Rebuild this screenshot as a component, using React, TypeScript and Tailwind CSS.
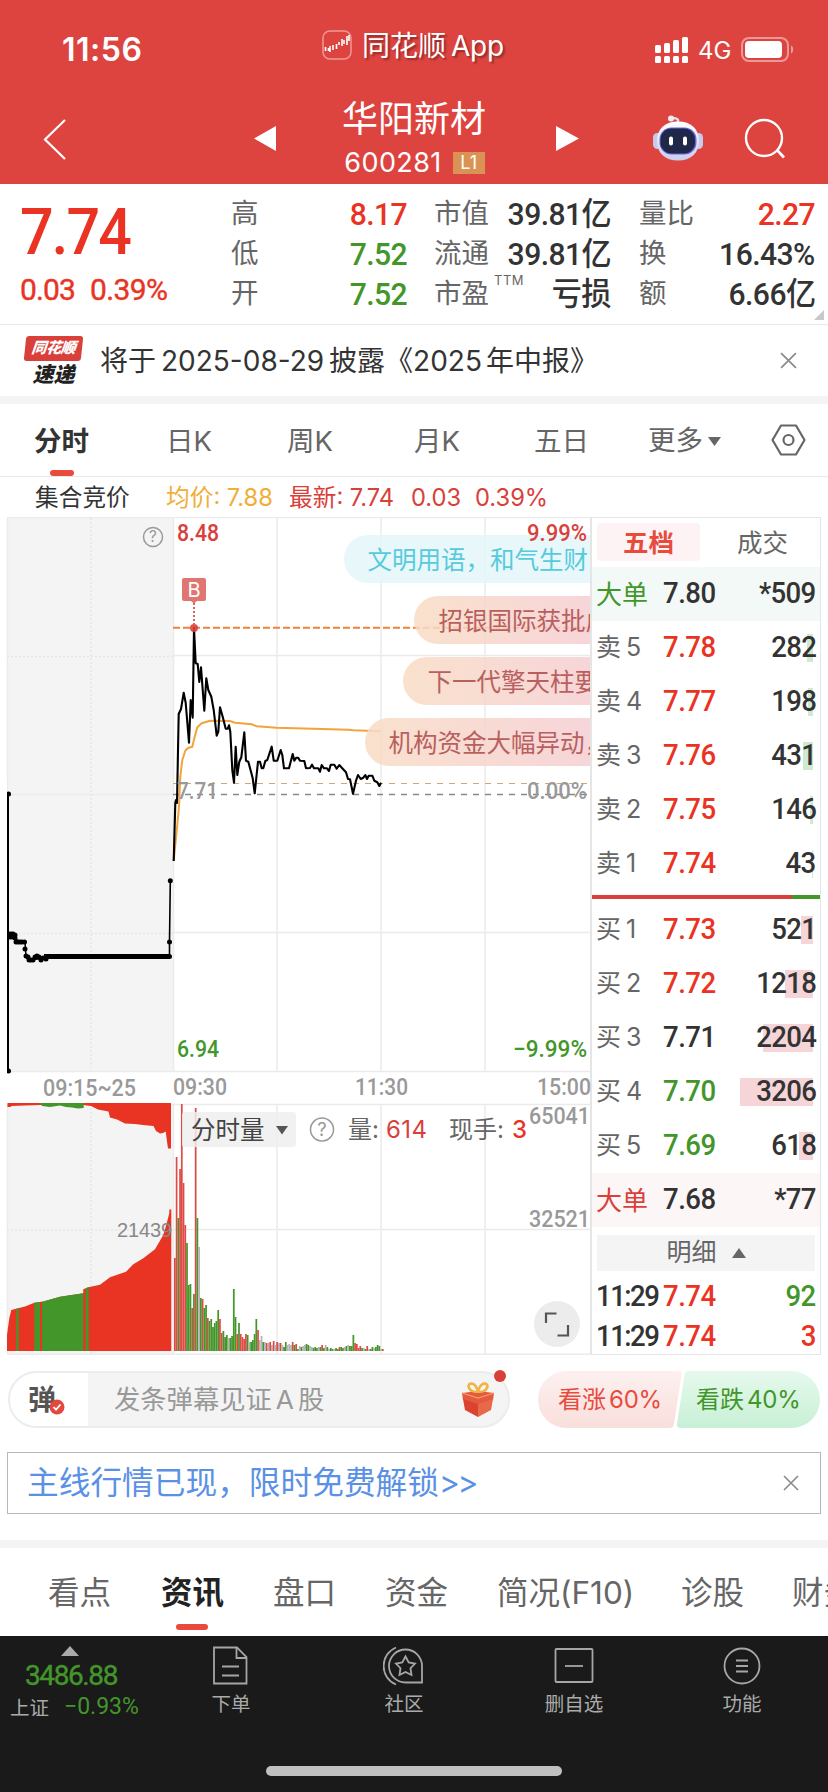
import React from 'react';

// Intraday price line, one point per visible turn
const PRICE =
  '173.7,861 175.3,803 176,800 177,803 178.7,714 181,709 183.7,692.7 185.7,703 189,742.7 190.7,700 192.7,717.7 194,628 195.7,663.3 197.7,664 199.3,682 201,667.3 204.3,710.7 206.3,678.3 208.3,690 211.3,696.7 213.7,710 216.7,735.7 218.3,731.7 220,707.3 222.7,716.7 225.7,728.7 227.7,728.7 229,725.3 230.3,731.7 232.3,770 234,782.7 235.7,746.7 237.3,775 239.3,761.7 241.3,757.3 244.3,732.3 246,760.7 248.3,761.7 251,771.7 252.7,778.3 254.7,793.3 258,761.7 260,761.7 261.7,768.3 263.3,768.3 265.3,761 267.3,760 271.7,746.7 273.7,760.7 277.3,760.7 280.7,750 282.3,755 284,768.3 289,768.3 292.7,754 294.3,760.7 296.3,757.7 298,757.7 300,760.7 304.3,761 306,768.3 310,768 312,764.7 314,768.3 318.3,768.3 320,771.7 321.7,765 324,768.3 327,768.3 329,771 330.7,764.7 334.3,764.7 336.7,768.7 339.3,765 342.7,768.7 346,772.3 348,779 350,779.3 353,793.7 356,780.7 358,775 360.7,779 363.3,777.7 365.3,775 367,779 368.7,775.7 372.3,775.7 374.3,780.7 377.3,782.3 379.3,786 381,782.7';

const AVERAGE =
  '173.7,861 176.8,830 179,806.7 180.3,776.7 182.3,760 185.3,750.7 188,748 192.3,746.7 194.3,738.3 197.3,727.3 201.7,723.3 210,720.7 230,721 235,722.7 251.7,724.3 256.7,726.3 276.7,727.7 348.3,729.7 353.3,730.3 381,731.3';

// Dots of the call auction before the open
const AUCTION_DOTS = [
  [8.5, 794], [9, 934], [11, 934], [13, 934], [15, 935], [10, 937], [12, 937], [15, 938], [16, 942],
  [18, 942], [20, 942], [22, 942], [24.5, 942], [25, 949], [26, 956], [28, 957], [29, 960], [31, 960],
  [33, 960], [35, 957], [37, 956], [39, 957], [41, 960], [43, 958], [46, 959], [48, 956.5],
  [169.5, 956.5], [169.5, 942], [170.3, 880.7], [8.5, 1071],
];

// Volume per minute: colour and bar height
const VOLUME =
  'r93 r194 g133 r182 r247 r168 r126 g108 g66 g67 r43 g57 r243 g133 a104 g53 r52 g43 g46 r33 g30 g32 g24 g28 g30 g41 r32 r18 g20 g14 g16 a13 g13 g15 g62 g34 r17 g28 r17 r14 r12 r17 g16 a9 g9 g11 g17 g32 r21 a11 a15 g9 a9 r8 a8 r9 a6 r10 a6 r9 a8 r8 a6 g4 g9 a6 a7 a6 r9 g6 r7 g2 a5 g4 a5 a6 g7 g6 a5 a4 g3 g4 g3 a4 g4 r6 g3 a6 g4 a2 g3 g2 a2 g3 g2 r4 g4 g3 a4 g5 a6 g5 g5 g16 r8 r7 r3 r5 g3 a3 g2 r5 a2 g2 g4 a3 g4 g6 g5 a2 r2';

const BAR_COLORS: Record<string, string> = { r: '#dd4b46', g: '#43962a', a: '#b5b5b5' };

const bars = VOLUME.split(' ').map((v) => ({
  color: BAR_COLORS[v[0]],
  height: Number(v.slice(1)),
}));

const bullets = [
  { x: 344, y: 535, tx: 367.5, text: '文明用语，和气生财富', fill: '#56cbdc', bg: '#e3f6f9' },
  { x: 414, y: 596, tx: 438.5, text: '招银国际获批虚', fill: '#b9605f', bg: 'url(#warm)' },
  { x: 403, y: 657, tx: 427.5, text: '下一代擎天柱要', fill: '#b9605f', bg: 'url(#warm)' },
  { x: 365, y: 718, tx: 388.5, text: '机构资金大幅异动，', fill: '#b9605f', bg: 'url(#warm)' },
];

const labels = [
  { x: 177, y: 540.5, w: 42, text: '8.48', fill: '#d9403a' },
  { x: 527, y: 540.5, w: 60, text: '9.99%', fill: '#d9403a' },
  { x: 177, y: 798.5, w: 41, text: '7.71', fill: '#999' },
  { x: 527, y: 798.5, w: 60, text: '0.00%', fill: '#999' },
  { x: 177, y: 1057, w: 42, text: '6.94', fill: '#43962a' },
  { x: 513, y: 1057, w: 74, text: '−9.99%', fill: '#43962a' },
  { x: 43, y: 1096, w: 93, text: '09:15~25', fill: '#999' },
  { x: 173, y: 1095, w: 54, text: '09:30', fill: '#999' },
  { x: 355, y: 1095, w: 53, text: '11:30', fill: '#999' },
  { x: 537, y: 1095, w: 54, text: '15:00', fill: '#999' },
  { x: 529, y: 1124, w: 61, text: '65041', fill: '#999' },
  { x: 529, y: 1227, w: 61, text: '32521', fill: '#999' },
];

const stats = [
  [
    ['高', '8.17', 'text-[#ea3323]'],
    ['低', '7.52', 'text-[#43962a]'],
    ['开', '7.52', 'text-[#43962a]'],
  ],
  [
    ['市值', '39.81亿', 'text-[#333]'],
    ['流通', '39.81亿', 'text-[#333]'],
    ['市盈', '亏损', 'text-[#333]'],
  ],
  [
    ['量比', '2.27', 'text-[#ea3323]'],
    ['换', '16.43%', 'text-[#333]'],
    ['额', '6.66亿', 'text-[#333]'],
  ],
];

const sells = [
  ['卖5', '7.78', '282', 6],
  ['卖4', '7.77', '198', 5],
  ['卖3', '7.76', '431', 10],
  ['卖2', '7.75', '146', 3],
  ['卖1', '7.74', '43', 1],
] as const;

const buys = [
  ['买1', '7.73', '521', 12, 'text-[#ea3323]'],
  ['买2', '7.72', '1218', 28, 'text-[#ea3323]'],
  ['买3', '7.71', '2204', 50, 'text-[#333]'],
  ['买4', '7.70', '3206', 73, 'text-[#43962a]'],
  ['买5', '7.69', '618', 14, 'text-[#43962a]'],
] as const;

const StatusBar = () => (
  <div className="flex h-[92px] items-start text-white">
    <div className="ml-[62px] mt-[30px] w-[260px] text-[32px] font-semibold leading-10 tracking-[0.5px]">
      11:56
    </div>
    <svg className="mt-[30px]" width="30" height="30" viewBox="0 0 30 30" fill="none">
      <rect x="1" y="1" width="28" height="28" rx="7" stroke="#eb9a97" strokeWidth="1.5" />
      <path
        d="M3.500 17v4M6.500 18v3M8 16v6M11 15v5M14.500 14v5M17 12v3M20 9v7M22 10v4M25 6v9M27 5v6"
        stroke="#fff"
        strokeWidth="1.600"
      />
    </svg>
    <div className="ml-[10px] mt-[26px] w-[293px] text-[28px] leading-10 [text-shadow:2px_2px_2px_rgba(0,0,0,0.35)]">
      同花顺<span className="ml-[5px] tracking-[-0.3px]">App</span>
    </div>
    <svg className="mt-[37px]" width="33" height="26" viewBox="0 0 33 26" fill="#fff">
      <rect x="0" y="8" width="6" height="8" rx="1.500" />
      <rect x="9" y="6" width="6" height="10" rx="1.500" />
      <rect x="18" y="3" width="6" height="13" rx="1.500" />
      <rect x="27" y="0" width="6" height="16" rx="1.500" />
      <rect x="0" y="19" width="6" height="7" rx="1.500" />
      <rect x="9" y="19" width="6" height="7" rx="1.500" />
      <rect x="18" y="19" width="6" height="7" rx="1.500" />
      <rect x="27" y="19" width="6" height="7" rx="1.500" />
    </svg>
    <div className="ml-[10px] mt-[31px] w-[43px] text-[24px] leading-10">4G</div>
    <svg className="mt-[37px]" width="54" height="25" viewBox="0 0 54 25">
      <rect x="1" y="1" width="46" height="23" rx="7" fill="none" stroke="#eb9a97" strokeWidth="2" />
      <rect x="4" y="4" width="37" height="17" rx="4" fill="#fff" />
      <path d="M50 8.500c3 1 3 7 0 8z" fill="#eb9a97" />
    </svg>
  </div>
);

const Robot = () => (
  <svg width="50" height="46" viewBox="0 0 50 46">
    <defs>
      <linearGradient id="shell" x1="0" y1="0" x2="0" y2="1">
        <stop offset="0" stopColor="#ffffff" />
        <stop offset="1" stopColor="#c9cdec" />
      </linearGradient>
    </defs>
    <path d="M25 8V5q-1-2-6-2" fill="none" stroke="#dfe0ee" strokeWidth="2.500" />
    <circle cx="18" cy="3.500" r="3" fill="#eceaf4" />
    <rect x="0" y="18" width="9" height="16" rx="4.500" fill="#c7cbea" />
    <rect x="41" y="18" width="9" height="16" rx="4.500" fill="#c7cbea" />
    <path d="M25 6.500C38 6.500 46 14 46 26S38 45.500 25 45.500 4 38 4 26 12 6.500 25 6.500z" fill="url(#shell)" />
    <rect x="6.500" y="12.500" width="37" height="27" rx="12" fill="#6d62dc" />
    <rect x="7.500" y="13.500" width="34.500" height="25" rx="11" fill="#20284a" />
    <rect x="16" y="21.500" width="4" height="9" rx="2" fill="#fff" />
    <rect x="30" y="21.500" width="4" height="9" rx="2" fill="#fff" />
  </svg>
);

const NavBar = () => (
  <div className="flex h-[92px] items-start text-white">
    <svg className="ml-[43px] mt-[27px]" width="24" height="41" viewBox="0 0 24 41" fill="none">
      <path d="M22 1L2 20.500 22 40" stroke="#fff" strokeWidth="2.200" />
    </svg>
    <svg className="ml-[187px] mt-[34px]" width="22" height="25" viewBox="0 0 22 25">
      <path d="M0 12.500L22 0v25z" fill="#fff" />
    </svg>
    <div className="ml-[50px] w-[176px] text-center">
      <div className="h-[52px] pt-[3px] text-[36px] leading-[48px]">华阳新材</div>
      <div className="flex h-[36px] items-center justify-center gap-[11px] pl-[1px] pt-[2px]">
        <span className="text-[27px] leading-8 tracking-[0.4px]">600281</span>
        <span className="h-[22px] w-[32px] bg-[#d99455] text-[18px] leading-[22px]">L1</span>
      </div>
    </div>
    <svg className="ml-[54px] mt-[34px]" width="23" height="25" viewBox="0 0 23 25">
      <path d="M23 12.500L0 0v25z" fill="#fff" />
    </svg>
    <div className="ml-[74px] mt-[23px]">
      <Robot />
    </div>
    <svg className="ml-[41px] mt-[26px]" width="43" height="42" viewBox="0 0 43 42" fill="none">
      <circle cx="20" cy="20" r="18" stroke="#fff" strokeWidth="2.400" />
      <path d="M33 32l7 7.500" stroke="#fff" strokeWidth="2.600" />
    </svg>
  </div>
);

const Quote = () => (
  <div className="flex h-[141px] border-b border-[#e8e8e8]">
    <div className="w-[231px] pl-[20px] pt-[12px] font-['Roboto'] text-[#ea3323]">
      <div className="h-[72px] origin-left scale-x-[0.91] text-[65px] font-medium leading-[72px] tracking-[-2px]">
        7.74
      </div>
      <div className="flex gap-[15px] pt-[2px] text-[30px] leading-[40px] tracking-[-0.9px] [-webkit-text-stroke:0.4px]">
        <span className="w-[55px]">0.03</span>
        <span className="tracking-[-0.6px]">0.39%</span>
      </div>
    </div>
    {stats.map((col, i) => (
      <div
        key={i}
        className={['w-[176px] mr-[27px]', 'w-[177px] mr-[28px]', 'w-[176px]'][i] + ' pt-[10px]'}
      >
        {col.map(([name, value, color]) => (
          <div key={name} className="flex h-[40px] items-center justify-between">
            <span className="flex text-[27.500px] text-[#666]">
              {name}
              {name === '市盈' && (
                <span className="-mt-[1px] ml-[5px] h-4 text-[13px] leading-4 tracking-[0.5px]">
                  TTM
                </span>
              )}
            </span>
            <span
              className={
                "origin-right scale-x-[0.94] font-['Roboto','Noto_Sans_CJK_SC'] text-[32px] font-medium leading-10 tracking-[-0.6px] " +
                color
              }
            >
              {value}
            </span>
          </div>
        ))}
      </div>
    ))}
    <svg className="ml-[-1px] mt-[126px] shrink-0" width="10" height="10" viewBox="0 0 10 10">
      <path d="M10 0v10H0z" fill="#c8c8c8" />
    </svg>
  </div>
);

const Cross = ({ size }: { size: number }) => (
  <svg width={size} height={size} viewBox="0 0 16 16">
    <path d="M1 1l14 14M15 1L1 15" stroke="#8a8a8a" strokeWidth="1.600" />
  </svg>
);

const Notice = () => (
  <div className="flex h-[71px] items-center">
    <div className="ml-[24px] flex w-[59px] flex-col items-center font-black italic">
      <div className="flex h-[25px] w-[57px] -skew-x-6 items-center justify-center rounded-[3px] bg-[#d9403a] text-[15px] tracking-[-0.3px] text-white">
        同花顺
      </div>
      <div className="mt-[3px] h-[22px] text-[21px] leading-[22px] text-[#222]">速递</div>
    </div>
    <div className="ml-[17px] w-[680px] text-[28px] text-[#333]">
      将于<span className="mx-[5px]">2025-08-29</span>披露《
      <span className="mr-[4px]">2025</span>年中报》
    </div>
    <Cross size={17} />
  </div>
);

const periods = [
  ['分时', 'w-[132px] font-bold text-[#333]'],
  ['日K', 'w-[121px]'],
  ['周K', 'w-[127px]'],
  ['月K', 'w-[120px]'],
  ['五日', 'w-[114px]'],
];

const PeriodTabs = () => (
  <div className="flex h-[73px] items-center border-b border-[#e8e8e8] pl-[34px] text-[27.500px] text-[#666]">
    {periods.map(([name, cls], i) => (
      <div key={name} className={'relative h-[72px] leading-[74px] ' + cls}>
        {name}
        {i === 0 && (
          <span className="absolute bottom-0 left-[16px] h-[6px] w-[24px] rounded-[3px] bg-[#e84b3c]" />
        )}
      </div>
    ))}
    <div className="flex w-[123px] items-center gap-[5px] pt-[2px]">
      更多
      <svg width="13" height="9" viewBox="0 0 13 9">
        <path d="M0 0h13L6.500 9z" fill="#666" />
      </svg>
    </div>
    <svg width="35" height="32" viewBox="0 0 35 32" fill="none" stroke="#666" strokeWidth="2.200">
      <path d="M10 1.500h15L33.500 16 25 30.500H10L1.500 16z" strokeLinejoin="round" />
      <circle cx="17.500" cy="16" r="5" />
    </svg>
  </div>
);

const InfoLine = () => (
  <div className="flex h-[40px] items-center pl-[35px] pt-[1px] text-[23.700px] text-[#d9403a]">
    <span className="w-[131px] text-[#333]">集合竞价</span>
    <span className="w-[123px] text-[#f0ae37]">均价: 7.88</span>
    <span className="w-[122px]">最新: 7.74</span>
    <span className="w-[64px]">0.03</span>
    <span>0.39%</span>
  </div>
);

const Help = ({ cx, cy, r }: { cx: number; cy: number; r: number }) => (
  <g>
    <circle cx={cx} cy={cy} r={r} fill="none" stroke="#999" strokeWidth="1.500" />
    <text x={cx} y={cy + r * 0.55} fontSize={r * 1.6} fill="#999" textAnchor="middle">
      ?
    </text>
  </g>
);

const Chart = () => (
  <svg className="shrink-0" width="592" height="838" viewBox="0 517 592 838">
    <defs>
      <linearGradient id="warm">
        <stop offset="0" stopColor="#f8dcc4" />
        <stop offset="1" stopColor="#f5ccd4" />
      </linearGradient>
      <clipPath id="plot">
        <rect x="7" y="517" width="583" height="838" />
      </clipPath>
      <clipPath id="auction">
        <path d="M7 1351V1335L9.300 1318 11.300 1310 25 1306.500 34.300 1302.700 43.300 1301.500 60 1296.700 83.300 1293.300V1289.300L88.300 1287.300 100 1284.700 110 1277.300 126 1271.700 133.300 1264.300 143.300 1258.300 155 1249.300 163.300 1235 166.700 1223.300 169.300 1213.300V1209.500H171.300V1351z" />
      </clipPath>
    </defs>

    {/* grid */}
    <rect x="7" y="517" width="166" height="554" fill="#f4f4f4" />
    <rect x="7" y="1104" width="166" height="250" fill="#f4f4f4" />
    <g stroke="#ebebeb" strokeWidth="1.500" fill="none">
      <path d="M7 517.500H592M173 655.500H590M173 932.500H590M7 1071.500H590M7 1104.500H590M173 1229.500H590M7 1354.300H592" />
      <path d="M7.500 517V1071M173.500 517V1071M277 517V1071M381 517V1071M485 517V1071M7.500 1104V1354M173.500 1104V1354M277 1104V1354M381 1104V1354M485 1104V1354M7 794.500H173" />
      <path
        d="M91 518V1071M7 656.500H173M7 933.500H173M91 1104V1354M7 1230H173"
        stroke="#e6e6e6"
        strokeDasharray="2 2"
      />
    </g>
    <path d="M591 517V1354" stroke="#e5e5e5" strokeWidth="2" />

    {/* reference levels */}
    <path d="M173 627.700H590" stroke="#ee8438" strokeWidth="1.900" strokeDasharray="7 3" />
    <path d="M173 783.500H590" stroke="#d0aa74" strokeWidth="1.200" strokeDasharray="6 6" />
    <path d="M173 794.500H590" stroke="#888" strokeWidth="1.300" strokeDasharray="6 6" />

    {/* call auction price */}
    <path d="M8 794V1072" stroke="#000" strokeWidth="2" />
    <path d="M9 934L16 940 25 942 26 956 30 960 46 958" stroke="#000" strokeWidth="1.500" fill="none" />
    <path d="M44 956.500H169.500" stroke="#000" strokeWidth="5" />
    <path d="M169.500 956V942L170.300 881" stroke="#000" strokeWidth="1.600" fill="none" />
    {AUCTION_DOTS.map(([x, y], i) => (
      <circle key={i} cx={x} cy={y} r="2.500" />
    ))}
    <rect x="0" y="780" width="7" height="300" fill="#fff" />

    {/* trading session */}
    <polyline points={AVERAGE} fill="none" stroke="#f2a33c" strokeWidth="2" strokeLinejoin="round" />
    <polyline points={PRICE} fill="none" stroke="#000" strokeWidth="2.100" strokeLinejoin="round" />

    {/* buy marker */}
    <path d="M194 603V624" stroke="#d9403a" strokeWidth="1.600" strokeDasharray="2 2" />
    <circle cx="194" cy="628" r="4" fill="#d9403a" opacity="0.900" />
    <rect x="182" y="578" width="24" height="23" rx="2" fill="#e07572" />
    <path d="M191 601h6l-3 2.500z" fill="#e07572" />
    <text x="194" y="597" fontSize="20" fill="#fff" textAnchor="middle">
      B
    </text>
    <Help cx={153} cy={537} r={9.5} />

    {/* scrolling comments */}
    <g clipPath="url(#plot)">
      {bullets.map((b) => (
        <g key={b.text}>
          <rect x={b.x} y={b.y} width={591 - b.x + 24} height="48" rx="24" fill={b.bg} opacity="0.850" />
          <text x={b.tx} y={b.y + 33.5} fontSize="24.500" fill={b.fill}>
            {b.text}
          </text>
        </g>
      ))}
    </g>

    {/* call auction volume */}
    <path
      d="M7.500 1103H171V1148.500H168L166.500 1138 165.700 1131.500 163 1133 160 1133.500 156 1131 153.500 1126 143 1125 135 1124 125 1123.500 117 1119.500 110 1117.500 108.500 1111.500 98 1109.500 91 1106 83 1105 40 1105 25 1105.500 12 1106 10 1107H7.500z"
      fill="#e93423"
    />
    <path d="M40 1103H83.700V1108L78 1108.500 72 1107.500 66 1107 60 1105.500 50 1107 42 1106z" fill="#43962a" />
    <g clipPath="url(#auction)">
      <rect x="7" y="1200" width="165" height="151" fill="#e93423" />
      <path d="M16.300 1200h2.400v151h-2.400zM34.300 1200h5.700v151h-5.700zM42 1200h41.300v151H42zM85.700 1200h3v151h-3z" fill="#43962a" />
    </g>

    {/* session volume */}
    {bars.map((bar, i) => (
      <rect
        key={i}
        x={174 + i * 1.733}
        y={1351 - bar.height}
        width="1.733"
        height={bar.height}
        fill={bar.color}
      />
    ))}

    {/* indicator bar */}
    <rect x="182" y="1112" width="114" height="35" rx="3" fill="#efefef" opacity="0.850" />
    <text x="191" y="1138.500" fontSize="24.500" fill="#444">
      分时量
    </text>
    <path d="M276 1126h12l-6 8.500z" fill="#555" />
    <Help cx={322} cy={1129.5} r={11.5} />
    <g fontSize="24" fill="#666">
      <text x="348" y="1138">量:</text>
      <text x="386" y="1138" fill="#d9403a" textLength="41">614</text>
      <text x="449" y="1138">现手:</text>
      <text x="512" y="1138" fill="#ea3323" fontWeight="500">3</text>
    </g>
    <text x="117" y="1237" fontSize="20" fill="#888" textLength="55" fontFamily="Liberation Sans">
      21439
    </text>

    {/* axis labels */}
    <g fontFamily="Roboto" fontWeight="500" fontSize="24">
      {labels.map((l) => (
        <text key={l.x + l.text} x={l.x} y={l.y} fill={l.fill} textLength={l.w} lengthAdjust="spacingAndGlyphs">
          {l.text}
        </text>
      ))}
    </g>

    {/* full screen button */}
    <circle cx="557" cy="1324" r="23" fill="#ececec" />
    <path d="M546 1323V1313.500H556.500M568 1325V1335.500H557.500" fill="none" stroke="#555" strokeWidth="2.200" />
  </svg>
);

type RowProps = {
  label: string;
  price: string;
  volume: string;
  labelColor?: string;
  priceColor?: string;
  bar?: number;
  barColor?: string;
  bg?: string;
};

const Row = ({
  label,
  price,
  volume,
  labelColor = 'text-[#666]',
  priceColor = 'text-[#333]',
  bar = 0,
  barColor = '',
  bg = '',
}: RowProps) => (
  <div className={'relative flex h-[54px] shrink-0 items-center pl-[4px] ' + bg}>
    {label === '大单' ? (
      <span className={'w-[67px] text-[26px] ' + labelColor}>{label}</span>
    ) : (
      <span className={'flex w-[67px] gap-[5px] text-[25px] ' + labelColor}>
        <span>{label[0]}</span>
        <span>{label[1]}</span>
      </span>
    )}
    <span
      className={
        "origin-left scale-x-[0.95] font-['Roboto'] text-[29px] font-medium tracking-[-0.500px] " + priceColor
      }
    >
      {price}
    </span>
    <span className={'absolute right-[7px] h-[28px] ' + barColor} style={{ width: bar }} />
    <span className="relative ml-auto mr-[4px] origin-right scale-x-[0.95] font-['Roboto'] text-[29px] font-medium tracking-[-0.700px] text-[#333]">
      {volume}
    </span>
  </div>
);

const OrderBook = () => (
  <div className="flex w-[229px] flex-col border-y border-r border-[#e5e5e5]">
    <div className="flex h-[49px] shrink-0 pl-[5px] pt-[5px] text-[25.500px] leading-[39px]">
      <div className="h-[38px] w-[103px] rounded-[4px] bg-[#fdf3f4] text-center font-bold text-[#e84b3c]">
        五档
      </div>
      <div className="ml-[37px] text-[#666]">成交</div>
    </div>
    <Row label="大单" price="7.80" volume="*509" labelColor="text-[#43962a]" bg="bg-[#f3f9f6]" />
    {sells.map(([label, price, volume, bar]) => (
      <Row
        key={label}
        label={label}
        price={price}
        volume={volume}
        priceColor="text-[#ea3323]"
        bar={bar}
        barColor="bg-[#d0e9d0]"
      />
    ))}
    <div className="my-[4px] flex h-[4px] shrink-0">
      <div className="w-[200px] bg-[#d9403a]" />
      <div className="flex-1 bg-[#43962a]" />
    </div>
    {buys.map(([label, price, volume, bar, color]) => (
      <Row
        key={label}
        label={label}
        price={price}
        volume={volume}
        priceColor={color}
        bar={bar}
        barColor="bg-[#f5d5d7]"
      />
    ))}
    <Row label="大单" price="7.68" volume="*77" labelColor="text-[#d9403a]" bg="bg-[#fdf6f6]" />
    <div className="mx-[5px] mt-[8px] flex h-[36px] shrink-0 items-center justify-center gap-[15px] bg-[#f4f4f4] text-[25px] text-[#666]">
      明细
      <svg width="14" height="10" viewBox="0 0 14 10">
        <path d="M0 10h14L7 0z" fill="#666" />
      </svg>
    </div>
    <div className="mt-[8px] flex flex-col gap-[5px] font-['Roboto'] text-[29px] font-medium text-[#333]">
      {[
        ['92', 'text-[#43962a]'],
        ['3', 'text-[#ea3323]'],
      ].map(([volume, color]) => (
        <div key={volume} className="flex h-[35px] items-center pl-[4px] pr-[4px]">
          <span className="w-[67px]">
            <span className="inline-block origin-left scale-x-[0.95] tracking-[-1.600px]">11:29</span>
          </span>
          <span className="origin-left scale-x-[0.95] tracking-[-0.500px] text-[#ea3323]">7.74</span>
          <span className={'ml-auto origin-right scale-x-[0.95] tracking-[-0.700px] ' + color}>{volume}</span>
        </div>
      ))}
    </div>
  </div>
);

const Gift = () => (
  <svg width="36" height="36" viewBox="0 0 36 36">
    <path
      d="M18 10C9 11 6 2 11 1.500c4 0 6 4 7 8.500 1-4.500 3-8.500 7-8.500C30 2 27 11 18 10z"
      fill="none"
      stroke="#f0b544"
      strokeWidth="2.600"
    />
    <path d="M2 11l16-2 16 2-1 7-15 5L3 18z" fill="#e55a3c" />
    <path d="M3 17l15 5v13L5 28z" fill="#d9432f" />
    <path d="M33 17l-15 5v13l13-7z" fill="#e8684a" />
    <path d="M2 11l16 5 16-5" fill="none" stroke="#f39a78" strokeWidth="1.200" />
    <path d="M18 10C9 11 6 2 11 1.500c4 0 6 4 7 8.500 1-4.500 3-8.500 7-8.500C30 2 27 11 18 10z" fill="none" stroke="#f0b544" strokeWidth="2" />
  </svg>
);

const CommentBar = () => (
  <div className="flex h-[98px] items-start pl-[8px] pt-[16px]">
    <div className="relative flex h-[57px] w-[502px] items-center rounded-full border-2 border-[#ececec] bg-[#f4f4f4]">
      <div className="relative flex h-full w-[78px] items-center rounded-l-full bg-white pl-[18px] text-[28px] font-bold text-[#555]">
        弹
        <svg className="absolute left-[39px] top-[26px]" width="16" height="16" viewBox="0 0 16 16">
          <circle cx="8" cy="8" r="7.500" fill="#e5493d" />
          <path d="M4.500 8l2.500 2.700L11.500 5.500" fill="none" stroke="#fff" strokeWidth="1.800" />
        </svg>
      </div>
      <div className="ml-[26px] w-[346px] text-[26.300px] text-[#999]">
        发条弹幕见证<span className="mx-[4px]">A</span>股
      </div>
      <Gift />
      <span className="absolute -top-[3px] right-[2px] h-[12px] w-[12px] rounded-full bg-[#d9403a]" />
    </div>
    <div className="relative ml-[28px] flex h-[57px] w-[282px] items-center text-[24px]">
      <svg className="absolute inset-0" width="282" height="57" viewBox="0 0 282 57">
        <defs>
          <linearGradient id="up" x1="0" y1="0" x2="0" y2="1">
            <stop offset="0" stopColor="#fcf0ef" />
            <stop offset="1" stopColor="#f9dfdc" />
          </linearGradient>
          <linearGradient id="down" x1="0" y1="0" x2="0" y2="1">
            <stop offset="0" stopColor="#e6f9ed" />
            <stop offset="1" stopColor="#c8f0d6" />
          </linearGradient>
        </defs>
        <path d="M28.500 0H140q4 0 3.500 4L136 53q-1 4-4 4H28.500a28.500 28.500 0 010-57z" fill="url(#up)" />
        <path d="M253.500 0H151q-4 0-4.500 4L139 53q-.5 4 3.500 4H253.500a28.500 28.500 0 000-57z" fill="url(#down)" />
      </svg>
      <span className="relative ml-[20px] w-[138px] text-[#e84b3c]">
        看涨<span className="ml-[3px] tracking-[-0.200px]">60%</span>
      </span>
      <span className="relative text-[#43962a]">
        看跌<span className="ml-[3px] tracking-[-0.200px]">40%</span>
      </span>
    </div>
  </div>
);

const newsTabs = [
  ['看点', 'w-[113px]'],
  ['资讯', 'w-[112px] font-bold text-[#222]'],
  ['盘口', 'w-[112px]'],
  ['资金', 'w-[112px]'],
  ['简况(F10)', 'w-[184px]'],
  ['诊股', 'w-[111px]'],
  ['财务', 'w-[62px]'],
];

const NewsTabs = () => (
  <div className="flex h-[88px] overflow-hidden pl-[48px] text-[31.500px] text-[#666]">
    {newsTabs.map(([name, cls], i) => (
      <div key={name} className={'relative h-[88px] shrink-0 whitespace-nowrap leading-[90px] ' + cls}>
        {name}
        {i === 1 && (
          <span className="absolute bottom-[6px] left-[15px] h-[6px] w-[32px] rounded-[3px] bg-[#e84b3c]" />
        )}
      </div>
    ))}
  </div>
);

const tools = [
  {
    name: '下单',
    icon: (
      <>
        <path d="M4 2.500H27L36.500 12V38.500H4z" />
        <path d="M26.500 3V13H36.500M12 21.500H29M12 30.500H29" />
      </>
    ),
  },
  {
    name: '社区',
    icon: (
      <>
        <path d="M22.500 4.500A16.500 16.500 0 0 0 22.500 37.500H39V21A16.500 16.500 0 0 0 22.500 4.500z" />
        <path d="M13 2.500A20 20 0 0 0 13 39.500" />
        <path d="M22.500 11.500l3.200 6 6.300 1-4.500 4.700 1 6.800-6-3-6 3 1-6.800-4.500-4.700 6.300-1z" />
      </>
    ),
  },
  {
    name: '删自选',
    icon: (
      <>
        <rect x="2.500" y="4" width="37" height="33" rx="1" />
        <path d="M12 21H30" />
      </>
    ),
  },
  {
    name: '功能',
    icon: (
      <>
        <circle cx="21" cy="21" r="17.500" />
        <path d="M15 15.500H27M15 21H27M15 26.500H27" />
      </>
    ),
  },
];

const Footer = () => (
  <div className="h-[156px] bg-[#1a1a1a]">
    <div className="flex h-[130px]">
      <div className="w-[146px] pt-[10px]">
        <svg className="ml-[61px]" width="18" height="10" viewBox="0 0 18 10">
          <path d="M0 10h18L9 0z" fill="#aaa" />
        </svg>
        <div className="pl-[25px] pt-[3px] font-['Roboto'] text-[28px] leading-[34px] tracking-[-1.400px] text-[#43962a] [-webkit-text-stroke:0.4px]">
          3486.88
        </div>
        <div className="-mt-[1px] flex items-center pl-[10px] text-[19.500px] leading-[28px] text-[#aaa]">
          <span className="w-[54px] pt-[2px]">上证</span>
          <span className="font-['Roboto'] text-[23px] text-[#43962a]">−0.93%</span>
        </div>
      </div>
      {tools.map((tool, i) => (
        <div
          key={tool.name}
          className={
            ['w-[170px]', 'w-[176px]', 'w-[164px]', 'w-[172px]'][i] +
            ' flex flex-col items-center pt-[9px] text-[19.500px] leading-[30px] text-[#aaa]'
          }
        >
          <svg width="42" height="42" viewBox="0 0 42 42" fill="none" stroke="#a6a6a6" strokeWidth="1.800">
            {tool.icon}
          </svg>
          <div className="mt-[2px]">{tool.name}</div>
        </div>
      ))}
    </div>
    <div className="mx-auto h-[10px] w-[296px] rounded-full bg-[#c0c0c0]" />
  </div>
);

const App = () => {
  return (
    <div className="h-[1792px] w-[828px] overflow-hidden bg-white font-['Inter','Noto_Sans_CJK_SC',sans-serif]">
      <div className="h-[184px] bg-[#dd4440]">
        <StatusBar />
        <NavBar />
      </div>
      <Quote />
      <Notice />
      <div className="h-[8px] bg-[#f4f4f4]" />
      <PeriodTabs />
      <InfoLine />
      <div className="flex h-[838px]">
        <Chart />
        <OrderBook />
      </div>
      <CommentBar />
      <div className="mx-[7px] -mt-[1px] flex h-[62px] items-center justify-between border border-[#b8b8b8] pl-[19px] pr-[21px] text-[#5a91e6]">
        <span className="text-[31.700px]">
          主线行情已现，限时免费解锁<span className="tracking-[-2.500px]">&gt;&gt;</span>
        </span>
        <Cross size={16} />
      </div>
      <div className="mt-[26px] h-[8px] bg-[#f4f4f4]" />
      <NewsTabs />
      <Footer />
    </div>
  );
};

export default App;
